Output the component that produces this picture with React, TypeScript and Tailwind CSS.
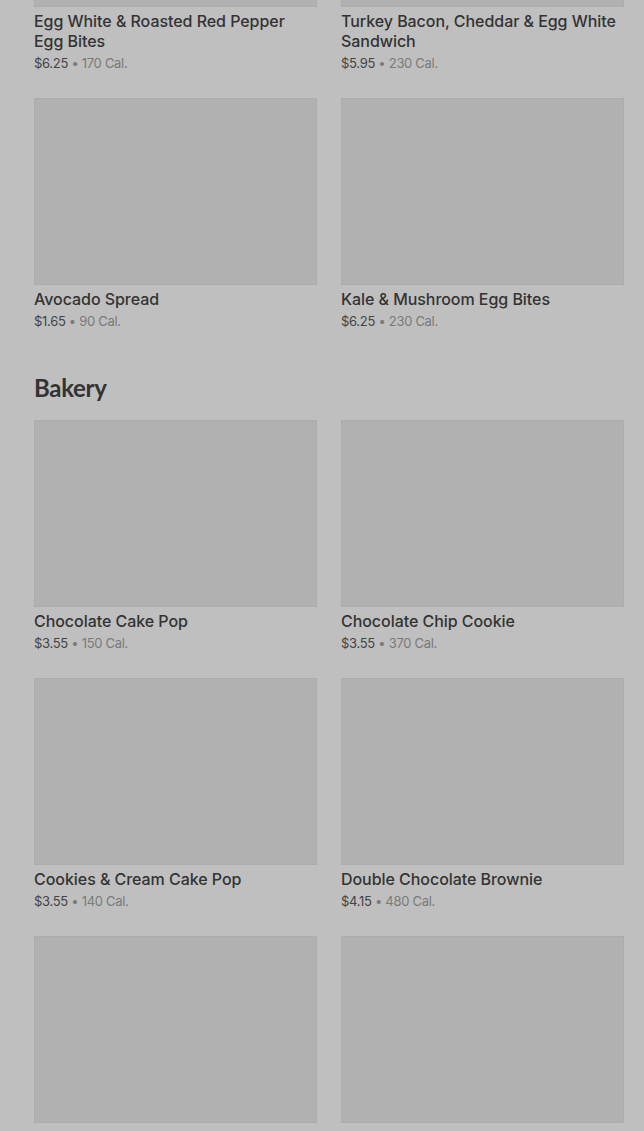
import React from "react";

type Item = { name: string; price: string; cal: string };

const top: Item[] = [
  { name: "Egg White & Roasted Red Pepper Egg Bites", price: "$6.25", cal: "170 Cal." },
  { name: "Turkey Bacon, Cheddar & Egg White Sandwich", price: "$5.95", cal: "230 Cal." },
  { name: "Avocado Spread", price: "$1.65", cal: "90 Cal." },
  { name: "Kale & Mushroom Egg Bites", price: "$6.25", cal: "230 Cal." },
];

const bakery: Item[] = [
  { name: "Chocolate Cake Pop", price: "$3.55", cal: "150 Cal." },
  { name: "Chocolate Chip Cookie", price: "$3.55", cal: "370 Cal." },
  { name: "Cookies & Cream Cake Pop", price: "$3.55", cal: "140 Cal." },
  { name: "Double Chocolate Brownie", price: "$4.15", cal: "480 Cal." },
  { name: "Vanilla Bean Scone", price: "$3.25", cal: "420 Cal." },
  { name: "Butter Croissant", price: "$3.45", cal: "260 Cal." },
];

function Card({ item }: { item: Item }) {
  return (
    <div className="flex flex-col">
      <div className="h-[187px] w-full border border-[#acacac] bg-[#b1b1b1]" />
      <div className="mt-1 text-[16px] leading-5 font-medium text-[#333333] tracking-[-0.05px]">
        {item.name}
      </div>
      <div className="mt-0.5 text-[13px] leading-5 text-[#444444] tracking-[-0.3px]">
        {item.price}
        <span className="text-[#7a7a7a]"> • {item.cal}</span>
      </div>
    </div>
  );
}

export default function App() {
  return (
    <div
      className="h-[1131px] w-[644px] overflow-hidden bg-[#bfbfbf]"
      style={{ fontFamily: "Inter, 'Noto Sans', sans-serif" }}
    >
      <div className="-mt-[180px] pl-[34px] pr-[20px]">
        <div className="grid grid-cols-2 gap-x-6 gap-y-[25px]">
          {top.map((it) => (
            <Card key={it.name} item={it} />
          ))}
        </div>
        <h2
          className="mt-[43px] mb-[18px] text-[24px] leading-7 font-bold text-[#333333] tracking-[-0.3px]"
          style={{ fontFamily: "Lato, Inter, sans-serif" }}
        >
          Bakery
        </h2>
        <div className="grid grid-cols-2 gap-x-6 gap-y-[25px]">
          {bakery.map((it) => (
            <Card key={it.name} item={it} />
          ))}
        </div>
      </div>
    </div>
  );
}
